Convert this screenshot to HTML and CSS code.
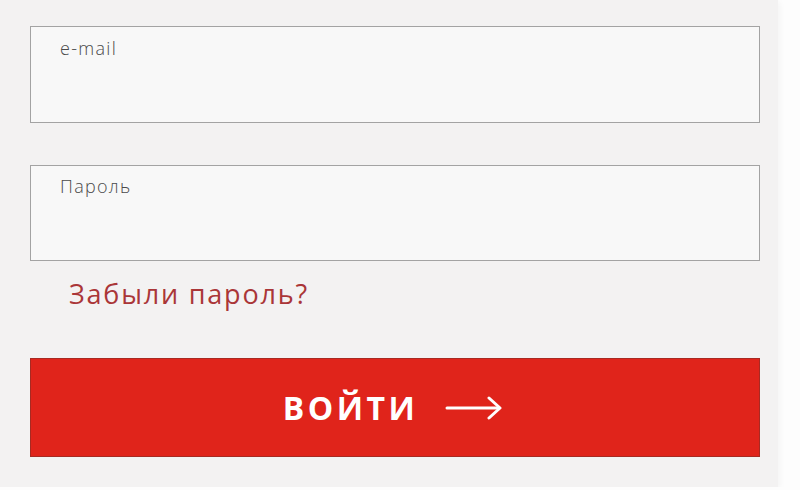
FILE: index.html
```html
<!DOCTYPE html>
<html lang="ru">
<head>
<meta charset="utf-8">
<link rel="stylesheet" href="styles.css">
</head>
<body>
<div class="panel">
  <form class="form">
    <label class="field"><span class="label">e-mail</span></label>
    <label class="field field-pass"><span class="label">Пароль</span></label>
    <a class="forgot" href="#">Забыли пароль?</a>
    <button class="submit" type="button">
      <span class="submit-text">ВОЙТИ</span>
      <svg class="arrow" width="58" height="24" viewBox="0 0 58 24" fill="none" stroke="#fff" stroke-width="3" stroke-linecap="round" stroke-linejoin="round">
        <path d="M2 12H54"/>
        <path d="M44 2L55 12L44 22"/>
      </svg>
    </button>
  </form>
</div>
</body>
</html>
```
FILE: styles.css
```css
html, body {
  margin: 0;
  padding: 0;
  background: #fdfdfd;
}
.panel {
  width: 778px;
  height: 487px;
  background: #f3f2f2;
  box-shadow: 2px 2px 6px rgba(0,0,0,0.04);
  box-sizing: border-box;
  padding: 26px 0 0 30px;
  font-family: "Open Sans", Lato, "Liberation Sans", sans-serif;
}
.form {
  display: flex;
  flex-direction: column;
  width: 730px;
}
.field {
  display: block;
  box-sizing: border-box;
  height: 97px;
  border: 1px solid #a3a3a3;
  background: #f8f8f8;
  padding: 9px 0 0 29px;
}
.field-pass {
  margin-top: 42px;
  height: 96px;
  padding-top: 8px;
}
.label {
  font-size: 18px;
  font-weight: 300;
  color: #4a4a4a;
  letter-spacing: 1.3px;
}
.forgot {
  margin: 18px 0 0 39px;
  font-size: 27px;
  color: #aa3638;
  text-decoration: none;
  line-height: 30px;
  letter-spacing: 1.8px;
  align-self: flex-start;
}
.submit {
  margin-top: 49px;
  height: 99px;
  box-sizing: border-box;
  border: 1px solid #a82a22;
  background: #e0241b;
  display: flex;
  align-items: center;
  justify-content: center;
  gap: 27px;
  padding: 0 4px 0 0;
  cursor: pointer;
}
.submit-text {
  font-family: "Open Sans", Lato, sans-serif;
  font-weight: 700;
  font-size: 32px;
  color: #fff;
  letter-spacing: 3.5px;
}
.arrow {
  display: block;
}
```
